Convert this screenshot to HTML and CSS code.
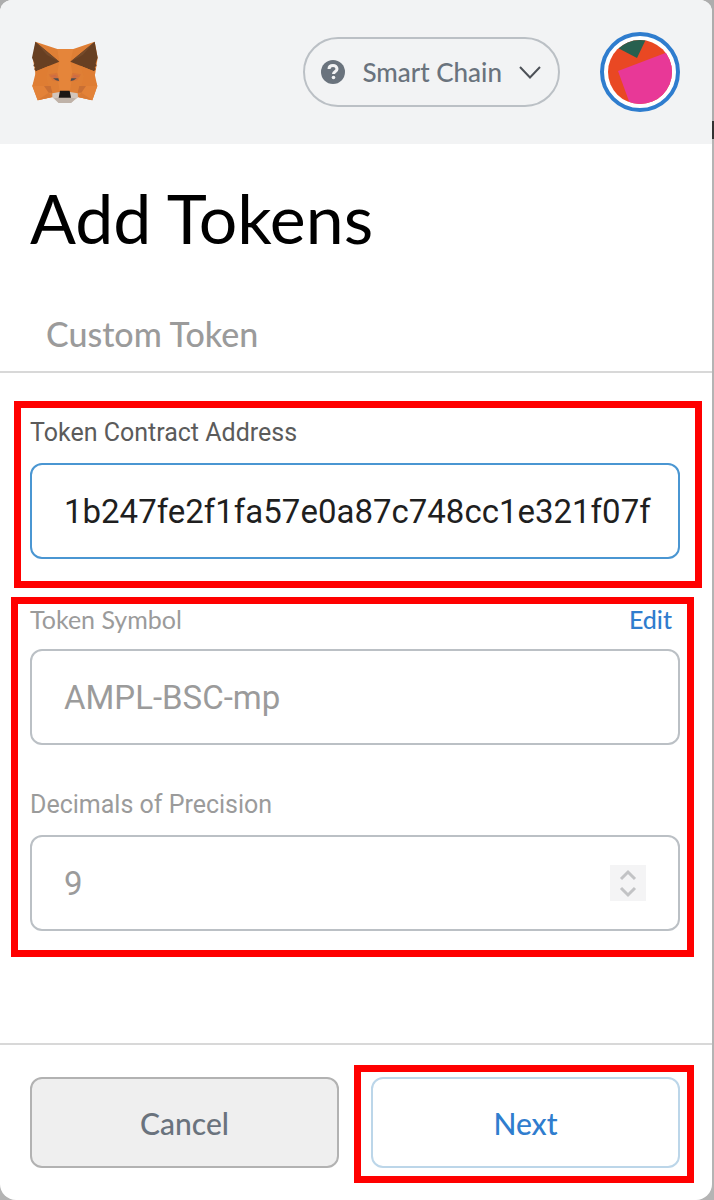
FILE: index.html
```html
<!DOCTYPE html>
<html lang="en">
<head>
  <meta charset="UTF-8">
  <meta name="viewport" content="width=device-width, initial-scale=1">
  <title>Add Tokens</title>
  <link rel="stylesheet" href="styles.css">
</head>
<body>
  <div class="popup">
    <header class="header">
      <svg class="logo" viewBox="36 33 198 189" role="img" aria-label="MetaMask">
        <polygon fill="#df7f35" points="46,35 112,57 160,57 224,35 233,83 226,130 222,140 232,168 217,211 174,201 153,217 116,217 97,201 53,211 37,168 48,140 40,95"/>
        <polygon fill="#e5853a" points="112,57 160,57 151,95 158,133 150,184 119,184 111,133 118,95"/>
        <polygon fill="#673f22" points="46,35 118,95 88,107 48,124 43,118 46,111 40,108 43,100 36,83"/>
        <polygon fill="#673f22" points="224,35 151,95 181,107 222,124 227,118 224,111 230,108 227,100 233,83"/>
        <polygon fill="#744a2b" points="46,35 118,95 81,75"/>
        <polygon fill="#744a2b" points="224,35 151,95 188,75"/>
        <polygon fill="#df7d33" points="48,124 88,107 78,140 86,168 37,168"/>
        <polygon fill="#df7d33" points="222,124 181,107 192,140 184,168 232,168"/>
        <polygon fill="#d87538" points="86,133 112,128 119,155 97,151"/>
        <polygon fill="#d87538" points="183,133 157,128 150,155 172,151"/>
        <polygon fill="#cd6d45" points="88,138 107,134 115,148"/>
        <polygon fill="#cd6d45" points="181,138 162,134 154,148"/>
        <polygon fill="#4c4c50" points="99,145 115,145 117,153 108,151"/>
        <polygon fill="#4c4c50" points="170,145 154,145 152,153 161,151"/>
        <polygon fill="#e38238" points="37,168 86,168 97,201 53,211"/>
        <polygon fill="#e38238" points="232,168 184,168 174,201 217,211"/>
        <polygon fill="#c96f34" points="72,168 92,168 97,188 86,188"/>
        <polygon fill="#c96f34" points="198,168 178,168 173,188 184,188"/>
        <polygon fill="#d97a34" points="53,211 86,188 97,201"/>
        <polygon fill="#d97a34" points="217,211 184,188 174,201"/>
        <polygon fill="#d3c6bc" points="97,190 119,186 150,186 173,190 174,202 153,219 116,219 97,202"/>
        <polygon fill="#bfb2a8" points="102,205 116,203 153,203 168,205 153,219 116,219"/>
        <polygon fill="#1b1715" points="120,182 149,182 153,203 116,203"/>
      </svg>
      <button class="network" type="button">
        <svg class="network-help" viewBox="0 0 24 24" aria-hidden="true">
          <circle cx="12" cy="12" r="12" fill="#6a737d"/>
          <path d="M8 9C8 6.500 9.800 5.500 12 5.500S16 7 16 9C16 11.500 12.500 11.300 12.500 14" fill="none" stroke="#f2f3f4" stroke-width="3"/>
          <circle cx="12.500" cy="17.500" r="1.800" fill="#f2f3f4"/>
        </svg>
        <span>Smart Chain</span>
        <svg class="network-arrow" viewBox="0 0 22 13" aria-hidden="true">
          <path d="M1 1L11 11.500L21 1" fill="none" stroke="#4d5157" stroke-width="2"/>
        </svg>
      </button>
      <button class="account" type="button" aria-label="Account">
        <svg viewBox="0 0 64 64" aria-hidden="true">
          <clipPath id="round"><circle cx="32" cy="32" r="32"/></clipPath>
          <g clip-path="url(#round)">
            <rect width="64" height="64" fill="#e94823"/>
            <polygon fill="#e83897" points="10,31 60,12 80,64 22,64"/>
            <polygon fill="#27604f" points="8,7 29,18 39,-3 20,-8"/>
          </g>
        </svg>
      </button>
    </header>

    <h1 class="title">Add Tokens</h1>
    <nav class="tabs">
      <a class="tab" href="#custom">Custom Token</a>
    </nav>

    <form class="form" id="custom">
      <div class="mark mark-address">
        <div class="field">
          <div class="field-head">
            <label class="label label-dark" for="address">Token Contract Address</label>
          </div>
          <input class="input input-active" id="address" type="text" value="1b247fe2f1fa57e0a87c748cc1e321f07f">
        </div>
      </div>

      <div class="mark mark-details">
        <div class="field">
          <div class="field-head">
            <label class="label label-symbol" for="symbol">Token Symbol</label>
            <button class="edit" type="button">Edit</button>
          </div>
          <input class="input" id="symbol" type="text" value="AMPL-BSC-mp" disabled>
        </div>
        <div class="field">
          <div class="field-head">
            <label class="label" for="decimals">Decimals of Precision</label>
          </div>
          <div class="input number">
            <input class="number-input" id="decimals" type="number" value="9" disabled>
            <svg class="spinner" viewBox="0 0 36 36" aria-hidden="true">
              <path d="M11 14L18 7L25 14M11 23L18 30L25 23" fill="none" stroke="#c2c3c5" stroke-width="3"/>
            </svg>
          </div>
        </div>
      </div>
    </form>

    <footer class="footer">
      <div class="action">
        <button class="button button-cancel" type="button">Cancel</button>
      </div>
      <div class="action mark action-next">
        <button class="button button-next" type="submit" form="custom">Next</button>
      </div>
    </footer>
  </div>
</body>
</html>
```
FILE: styles.css
```css
* {
  box-sizing: border-box;
}
body {
  margin: 0;
  padding-right: 2px;
  background: linear-gradient(#adadad 121px, #333 121px, #333 139px, #b4b4b4 139px);
  font-family: Lato, "Noto Sans", sans-serif;
}
button,
input {
  margin: 0;
  font-family: inherit;
}
.popup {
  display: flex;
  flex-direction: column;
  min-height: 100vh;
  background: #fff;
  border-radius: 12px 12px 16px 16px;
  overflow: hidden;
}

/* header */
.header {
  display: flex;
  align-items: center;
  height: 144px;
  padding: 0 32px;
  background: #f2f3f4;
}
.logo {
  width: 66px;
  height: 63px;
  margin-right: auto;
}
.network {
  display: flex;
  align-items: center;
  gap: 17px;
  height: 70px;
  margin-right: 40px;
  padding: 0 17px 0 16px;
  border: 2px solid #bbc0c5;
  border-radius: 35px;
  background: none;
  color: #6a737d;
  font-size: 26px;
  font-weight: 500;
}
.network-help {
  width: 24px;
  height: 24px;
}
.network-arrow {
  width: 22px;
  height: 13px;
}
.account {
  width: 80px;
  height: 80px;
  padding: 4px;
  border: 4px solid #2f7dce;
  border-radius: 50%;
  background: #fff;
}
.account svg {
  display: block;
}

/* title and tabs */
.title {
  margin: 0;
  padding: 32px 30px 0;
  color: #000;
  font-size: 68px;
  font-weight: 400;
  line-height: 84px;
}
.tabs {
  display: flex;
  padding: 44px 30px 0;
  border-bottom: 2px solid #d8d8d8;
}
.tab {
  padding: 10px 16px 17px;
  color: #9b9b9b;
  font-size: 34px;
  font-weight: 500;
  line-height: 40px;
  text-decoration: none;
}

/* form */
.form {
  flex: 1;
  padding: 28px 10px 40px 11px;
}
.mark {
  border: 7px solid #f00;
}
.mark-address {
  margin-left: 3px;
  padding: 11px 15px 22px 9px;
}
.mark-details {
  margin: 9px 8px 0 0;
  padding: 1px 7px 19px 12px;
}
.field + .field {
  margin-top: 46px;
}
.field-head {
  display: flex;
  justify-content: space-between;
  margin-bottom: 16px;
  line-height: 28px;
}
.label {
  color: #9b9b9b;
  font-family: Roboto, sans-serif;
  font-size: 25px;
}
.label-dark {
  color: #5b5b5b;
}
.label-symbol {
  font-family: inherit;
}
.edit {
  padding: 0 8px;
  border: 0;
  background: none;
  color: #2f7dce;
  font-size: 25px;
  font-weight: 500;
  line-height: 28px;
}
.input {
  display: block;
  width: 100%;
  height: 96px;
  padding: 0 32px;
  border: 2px solid #bbc0c5;
  border-radius: 12px;
  background: #fff;
  color: #9b9b9b;
  font-family: Roboto, sans-serif;
  font-size: 33px;
}
.input-active {
  padding-right: 24px;
  border-color: #4a96d2;
  color: #1f1f1f;
}
.number {
  display: flex;
  align-items: center;
}
.number-input {
  flex: 1;
  min-width: 0;
  padding: 0;
  border: 0;
  background: none;
  color: inherit;
  font-size: 33px;
  appearance: textfield;
}
.number-input::-webkit-inner-spin-button {
  -webkit-appearance: none;
  margin: 0;
}
.spinner {
  width: 36px;
  height: 36px;
  background: #f4f4f5;
}

/* footer */
.footer {
  display: flex;
  gap: 15px;
  padding: 20px 18px 17px 30px;
  border-top: 2px solid #d8d8d8;
}
.action {
  box-sizing: content-box;
  flex: 1 1 0;
  padding: 12px 0 15px;
}
.action-next {
  padding: 5px 7px 8px 10px;
}
.button {
  display: block;
  width: 100%;
  height: 91px;
  border: 2px solid #b2b2b2;
  border-radius: 12px;
  font-size: 30px;
  font-weight: 500;
}
.button-cancel {
  background: #efefef;
  color: #6a737d;
}
.button-next {
  border-color: #bcd6e9;
  background: #fff;
  color: #2f7dce;
}
```
